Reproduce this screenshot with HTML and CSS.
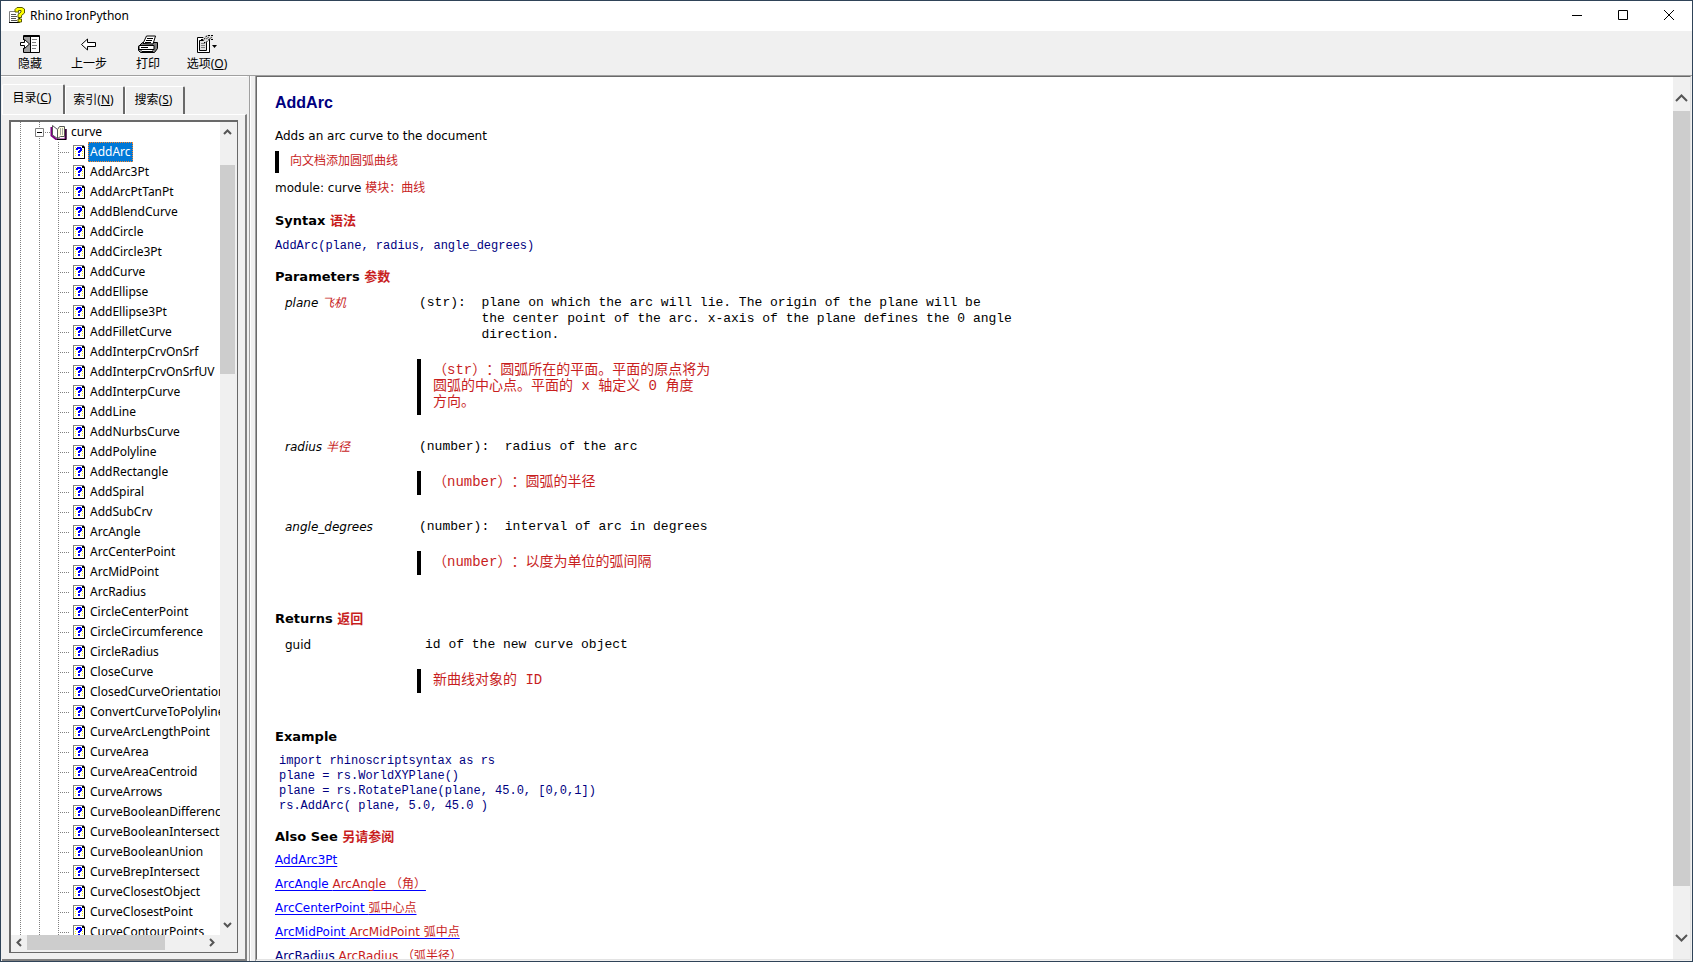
FILE: index.html
```html
<!DOCTYPE html>
<html lang="zh-CN">
<head>
<meta charset="utf-8">
<title>Rhino IronPython</title>
<link rel="stylesheet" href="styles.css">
</head>
<body>
<svg class="defs" aria-hidden="true">
  <symbol id="topic" viewBox="0 0 12 14">
    <path d="M0 0h10l2 2v12H0z" fill="#000"/>
    <path d="M0 0h10v1h-9v12H0z" fill="#808080"/>
    <path d="M1 1h8v2h2v10H1z" fill="#fff"/>
    <path d="M2.500 2v10M9.500 4v8" stroke="#ff0" stroke-dasharray="1 1" fill="none"/>
    <path d="M3 3h1V2h4v1h1v3H8v1H7v1H5V6h1V5h1V4H5v1H3zM5 9h2v2H5z" fill="#00f"/>
  </symbol>
</svg>
<div class="window">
  <header class="titlebar">
    <svg class="app-icon" width="16" height="16" viewBox="0 0 16 16">
      <path d="M.5 4.500h9v11h-9z" fill="#fff" stroke="#808080"/>
      <path d="M0 15.500h10.500V9" stroke="#000" fill="none"/>
      <path d="M2 7.500h5M2 9.500h6M2 11.500h5M2 13.500h6" stroke="#555"/>
      <path d="M6 4V2.500L8 .5h5L15.500 2v4L12.500 8.500v2H9V7.500l3-2.500V3.500H9.500V5H6zM9 12h3.500v3H9z" fill="#ff0" stroke="#5a5a00"/>
    </svg>
    <h1 class="title">Rhino IronPython</h1>
    <div class="controls">
      <button aria-label="最小化"><svg width="12" height="12"><path d="M1 6.500h10" stroke="#000"/></svg></button>
      <button aria-label="最大化"><svg width="12" height="12"><path d="M1.500 1.500h9v9h-9z" stroke="#000" fill="none"/></svg></button>
      <button aria-label="关闭"><svg width="12" height="12"><path d="M1 1l10 10M11 1L1 11" stroke="#000"/></svg></button>
    </div>
  </header>
  <nav class="toolbar">
    <button>
      <svg width="20" height="18" viewBox="0 0 20 18"><path d="M3.500 5V.5h16v17h-16V13" fill="none" stroke="#000"/><path d="M4 2h6v15H4z" fill="#a0a0a0"/><path d="M10 2h9v15h-9z" fill="#fff"/><path d="M3 1.500h16M10.500 2v15" stroke="#000"/><path d="M12 4.500h5M12 7.500h4M12 10.500h5M12 13.500h4" stroke="#808080"/><path d="M.5 7.500h4v-3l5 4.500-5 4.500v-3h-4z" fill="#fff" stroke="#000"/></svg>
      <span>隐藏</span>
    </button>
    <button>
      <svg width="20" height="18" viewBox="0 0 20 18"><path d="M2.500 9.500l6-5.500v3.500h8v4h-8V15z" fill="#fff" stroke="#000"/></svg>
      <span>上一步</span>
    </button>
    <button>
      <svg width="20" height="18" viewBox="0 0 20 18"><path d="M.5 11.500l4-4h15v6l-3 4h-14l-2-2z" fill="#808080" stroke="#000"/><path d="M5 8.500l3.500-7.500h9L15 9z" fill="#fff" stroke="#000"/><path d="M9 3.500h6M8 5.500h6M7 7.500h6" stroke="#000"/><path d="M1 10.500h15v4H1z" fill="#fff" stroke="#000"/><path d="M3 12.500h7M4 16.500h11" stroke="#000"/><path d="M4 15.500h10" stroke="#fff"/></svg>
      <span>打印</span>
    </button>
    <button>
      <svg width="20" height="18" viewBox="0 0 20 18"><path d="M.5 2.500h12v15H.5z" fill="#fff" stroke="#000"/><path d="M2.500 5.500h7v10h-7z" fill="#e0e0e0" stroke="#000"/><path d="M4 8.500h4M4 10.500h4M4 12.500h4" stroke="#808080"/><path d="M5 4l3-3.500h8v4l-4 .5-3 2.500z" fill="#ddd"/><path d="M4 4.500h3l3-4h6M16 4.500h-4l-3 3H7" fill="none" stroke="#000" stroke-dasharray="2 1"/><path d="M9 4l3-2M11 5l4-3" stroke="#555"/><path d="M15 10h5l-2.500 3z"/></svg>
      <span>选项(<u>O</u>)</span>
    </button>
  </nav>
  <div class="main">
    <aside class="sidebar">
      <div class="tabs" role="tablist">
        <button class="tab active" role="tab" aria-selected="true">目录(<u>C</u>)</button>
        <button class="tab" role="tab">索引(<u>N</u>)</button>
        <button class="tab" role="tab">搜索(<u>S</u>)</button>
      </div>
      <div class="tabpage">
        <div class="treebox">
          <ul class="tree">
            <li class="book">
              <svg width="32" height="16" viewBox="0 0 32 16"><path d="M.5 4.500h8v8h-8z" fill="#fff" stroke="#808080"/><path d="M2 8.500h5" stroke="#000"/><path d="M10 8.500h6" stroke="#808080" stroke-dasharray="1 1"/><path d="M16.500 3v8.500l5 4h9V5" fill="none" stroke="#800080" stroke-width="2"/><path d="M17.500 1.500l5 4v9l-5-3.500z" fill="#fff" stroke="#555"/><path d="M22.500 5.500l2-3h5v10h-4l-3 2z" fill="#ffd" stroke="#555"/><path d="M25.500 4v7M27.500 4v7" stroke="#aaa"/><path d="M22 15.500h9V5" stroke="#000" fill="none"/></svg>
              <a href="#curve">curve</a></li>
            <li><svg><use href="#topic"/></svg><a class="selected" href="#AddArc">AddArc</a></li>
            <li><svg><use href="#topic"/></svg><a href="#AddArc3Pt">AddArc3Pt</a></li>
            <li><svg><use href="#topic"/></svg><a href="#AddArcPtTanPt">AddArcPtTanPt</a></li>
            <li><svg><use href="#topic"/></svg><a href="#AddBlendCurve">AddBlendCurve</a></li>
            <li><svg><use href="#topic"/></svg><a href="#AddCircle">AddCircle</a></li>
            <li><svg><use href="#topic"/></svg><a href="#AddCircle3Pt">AddCircle3Pt</a></li>
            <li><svg><use href="#topic"/></svg><a href="#AddCurve">AddCurve</a></li>
            <li><svg><use href="#topic"/></svg><a href="#AddEllipse">AddEllipse</a></li>
            <li><svg><use href="#topic"/></svg><a href="#AddEllipse3Pt">AddEllipse3Pt</a></li>
            <li><svg><use href="#topic"/></svg><a href="#AddFilletCurve">AddFilletCurve</a></li>
            <li><svg><use href="#topic"/></svg><a href="#AddInterpCrvOnSrf">AddInterpCrvOnSrf</a></li>
            <li><svg><use href="#topic"/></svg><a href="#AddInterpCrvOnSrfUV">AddInterpCrvOnSrfUV</a></li>
            <li><svg><use href="#topic"/></svg><a href="#AddInterpCurve">AddInterpCurve</a></li>
            <li><svg><use href="#topic"/></svg><a href="#AddLine">AddLine</a></li>
            <li><svg><use href="#topic"/></svg><a href="#AddNurbsCurve">AddNurbsCurve</a></li>
            <li><svg><use href="#topic"/></svg><a href="#AddPolyline">AddPolyline</a></li>
            <li><svg><use href="#topic"/></svg><a href="#AddRectangle">AddRectangle</a></li>
            <li><svg><use href="#topic"/></svg><a href="#AddSpiral">AddSpiral</a></li>
            <li><svg><use href="#topic"/></svg><a href="#AddSubCrv">AddSubCrv</a></li>
            <li><svg><use href="#topic"/></svg><a href="#ArcAngle">ArcAngle</a></li>
            <li><svg><use href="#topic"/></svg><a href="#ArcCenterPoint">ArcCenterPoint</a></li>
            <li><svg><use href="#topic"/></svg><a href="#ArcMidPoint">ArcMidPoint</a></li>
            <li><svg><use href="#topic"/></svg><a href="#ArcRadius">ArcRadius</a></li>
            <li><svg><use href="#topic"/></svg><a href="#CircleCenterPoint">CircleCenterPoint</a></li>
            <li><svg><use href="#topic"/></svg><a href="#CircleCircumference">CircleCircumference</a></li>
            <li><svg><use href="#topic"/></svg><a href="#CircleRadius">CircleRadius</a></li>
            <li><svg><use href="#topic"/></svg><a href="#CloseCurve">CloseCurve</a></li>
            <li><svg><use href="#topic"/></svg><a href="#ClosedCurveOrientation">ClosedCurveOrientation</a></li>
            <li><svg><use href="#topic"/></svg><a href="#ConvertCurveToPolyline">ConvertCurveToPolyline</a></li>
            <li><svg><use href="#topic"/></svg><a href="#CurveArcLengthPoint">CurveArcLengthPoint</a></li>
            <li><svg><use href="#topic"/></svg><a href="#CurveArea">CurveArea</a></li>
            <li><svg><use href="#topic"/></svg><a href="#CurveAreaCentroid">CurveAreaCentroid</a></li>
            <li><svg><use href="#topic"/></svg><a href="#CurveArrows">CurveArrows</a></li>
            <li><svg><use href="#topic"/></svg><a href="#CurveBooleanDifference">CurveBooleanDifference</a></li>
            <li><svg><use href="#topic"/></svg><a href="#CurveBooleanIntersection">CurveBooleanIntersection</a></li>
            <li><svg><use href="#topic"/></svg><a href="#CurveBooleanUnion">CurveBooleanUnion</a></li>
            <li><svg><use href="#topic"/></svg><a href="#CurveBrepIntersect">CurveBrepIntersect</a></li>
            <li><svg><use href="#topic"/></svg><a href="#CurveClosestObject">CurveClosestObject</a></li>
            <li><svg><use href="#topic"/></svg><a href="#CurveClosestPoint">CurveClosestPoint</a></li>
            <li><svg><use href="#topic"/></svg><a href="#CurveContourPoints">CurveContourPoints</a></li>
          </ul>
          <div class="vbar">
            <button aria-label="向上滚动"><svg width="9" height="6"><path d="M1 5l3.500-3.500L8 5"/></svg></button>
            <div class="track"><div class="thumb"></div></div>
            <button aria-label="向下滚动"><svg width="9" height="6"><path d="M1 1l3.500 3.500L8 1"/></svg></button>
          </div>
          <div class="hbar">
            <button aria-label="向左滚动"><svg width="6" height="9"><path d="M5 1L1.500 4.500 5 8"/></svg></button>
            <div class="track"><div class="thumb"></div></div>
            <button aria-label="向右滚动"><svg width="6" height="9"><path d="M1 1l3.500 3.500L1 8"/></svg></button>
          </div>
        </div>
      </div>
    </aside>
    <div class="splitter"></div>
    <div class="viewer">
      <article class="page">
        <h1>AddArc</h1>
        <p>Adds an arc curve to the document</p>
        <blockquote class="intro">向文档添加圆弧曲线</blockquote>
        <p class="module">module: curve <span class="zh">模块：曲线</span></p>
        <h2>Syntax <span class="zh">语法</span></h2>
        <pre class="code">AddArc(plane, radius, angle_degrees)</pre>
        <h2>Parameters <span class="zh">参数</span></h2>
        <table>
          <tr>
            <th scope="row"><i>plane <span class="zh">飞机</span></i></th>
            <td><pre>(str):  plane on which the arc will lie. The origin of the plane will be
        the center point of the arc. x-axis of the plane defines the 0 angle
        direction.</pre>
              <blockquote>（str）：圆弧所在的平面。平面的原点将为<br>圆弧的中心点。平面的 x 轴定义 0 角度<br>方向。</blockquote></td>
          </tr>
          <tr>
            <th scope="row"><i>radius <span class="zh">半径</span></i></th>
            <td><pre>(number):  radius of the arc</pre>
              <blockquote>（number）：圆弧的半径</blockquote></td>
          </tr>
          <tr>
            <th scope="row"><i>angle_degrees</i></th>
            <td><pre>(number):  interval of arc in degrees</pre>
              <blockquote>（number）：以度为单位的弧间隔</blockquote></td>
          </tr>
        </table>
        <h2>Returns <span class="zh">返回</span></h2>
        <table>
          <tr>
            <th scope="row">guid</th>
            <td><pre class="value">id of the new curve object</pre>
              <blockquote>新曲线对象的 ID</blockquote></td>
          </tr>
        </table>
        <h2>Example</h2>
        <pre class="code example">import rhinoscriptsyntax as rs
plane = rs.WorldXYPlane()
plane = rs.RotatePlane(plane, 45.0, [0,0,1])
rs.AddArc( plane, 5.0, 45.0 )</pre>
        <h2>Also See <span class="zh">另请参阅</span></h2>
        <ul class="links">
          <li><a href="#AddArc3Pt">AddArc3Pt</a></li>
          <li><a href="#ArcAngle">ArcAngle <span class="zh">ArcAngle （角）</span></a></li>
          <li><a href="#ArcCenterPoint">ArcCenterPoint <span class="zh">弧中心点</span></a></li>
          <li><a href="#ArcMidPoint">ArcMidPoint <span class="zh">ArcMidPoint 弧中点</span></a></li>
          <li><a class="current" href="#ArcRadius">ArcRadius <span class="zh">ArcRadius （弧半径）</span></a></li>
        </ul>
      </article>
      <div class="vbar wide">
        <button aria-label="向上滚动"><svg width="13" height="9"><path d="M1 8l5.500-5.500L12 8"/></svg></button>
        <div class="track"><div class="thumb"></div></div>
        <button aria-label="向下滚动"><svg width="13" height="9"><path d="M1 1l5.500 5.500L12 1"/></svg></button>
      </div>
    </div>
  </div>
</div>
</body>
</html>
```
FILE: styles.css
```css
* { box-sizing: border-box; }
body { margin: 0; font-family: "Noto Sans", "Noto Sans CJK SC", sans-serif; font-size: 12px; color: #000; }
h1, h2, p, pre, ul, blockquote { margin: 0; padding: 0; }
ul { list-style: none; }
a { color: inherit; text-decoration: none; }
button { border: 0; padding: 0; background: none; font: inherit; color: inherit; }
.defs { display: none; }

.window { height: 100vh; display: flex; flex-direction: column; overflow: hidden; background: #f0f0f0; border: 1px solid #2f4358; }

.titlebar { display: flex; align-items: center; height: 30px; flex: none; padding: 0 0 2px 8px; gap: 5px; background: #fff; }
.title { flex: 1; font-size: 12px; font-weight: 400; }
.controls { display: flex; }
.controls button { width: 46px; height: 28px; display: grid; place-items: center; }

.toolbar { display: flex; flex: none; height: 44px; }
.toolbar button { width: 59px; padding: 4px 1px 0 0; display: flex; flex-direction: column; align-items: center; gap: 2px; line-height: 18px; }

.main { flex: 1; min-height: 0; display: flex; border-top: 1px solid #a0a0a0; }
.sidebar { width: 246px; flex: none; display: flex; flex-direction: column; padding: 7px 0 0 1px; border-top: 1px solid #fff; }
.splitter { flex: none; width: 7px; margin-left: 2px; border-left: 1px solid #a0a0a0; border-right: 1px solid #a0a0a0; background: #f0f0f0; box-shadow: inset 1px 0 #fff; }

.tabs { display: flex; align-items: flex-end; height: 30px; }
.tab { width: 60px; height: 28px; padding: 0 2px 3px 0; border: 1px solid #fff; border-right: 2px solid #696969; border-bottom: 0; border-radius: 2px 2px 0 0; }
.tab.active { width: 63px; height: 30px; padding-bottom: 6px; }
.tabpage { flex: 1; min-height: 0; padding: 5px 7px 6px 7px; border-top: 1px solid #fff; border-right: 2px solid #808080; border-bottom: 2px solid #808080; }

.treebox { height: 100%; display: grid; grid-template-columns: minmax(0, 1fr) 15px; grid-template-rows: minmax(0, 1fr) 15px; padding-right: 2px; padding-bottom: 2px; border: 2px solid #696969; border-right-width: 1px; border-bottom-width: 1px; background: #f0f0f0; }
.tree { overflow: hidden; background: #fff; font-size: 12px; }
.tree li { display: flex; align-items: center; gap: 3px; height: 20px; padding-left: 62px; white-space: nowrap;
  background:
    repeating-linear-gradient(#808080 0 1px, #fff 1px 2px) 9px 0 / 1px 20px no-repeat,
    repeating-linear-gradient(#808080 0 1px, #fff 1px 2px) 28px 0 / 1px 20px no-repeat,
    repeating-linear-gradient(#808080 0 1px, #fff 1px 2px) 47px 0 / 1px 20px no-repeat,
    repeating-linear-gradient(90deg, #808080 0 1px, #fff 1px 2px) 49px 10px / 10px 1px no-repeat; }
.tree svg { flex: none; width: 12px; height: 14px; }
.tree .book { padding-left: 24px; gap: 2px;
  background:
    repeating-linear-gradient(#808080 0 1px, #fff 1px 2px) 9px 0 / 1px 20px no-repeat,
    repeating-linear-gradient(#808080 0 1px, #fff 1px 2px) 28px 0 / 1px 20px no-repeat; }
.tree .book svg { width: 32px; height: 16px; }
.tree a { line-height: 18px; padding: 0 1px; border: 1px solid transparent; }
.tree .selected { background: #0078d7; color: #fff; border: 1px dotted #ff8728; }

.vbar, .hbar { display: flex; background: #f0f0f0; }
.vbar { flex-direction: column; }
.vbar button, .hbar button { flex: none; display: grid; place-items: center; }
.vbar button { height: 20px; }
.hbar button { width: 16px; }
.track { flex: 1; min-height: 0; }
.thumb { background: #cdcdcd; }
.vbar svg path, .hbar svg path { fill: none; stroke: #555; stroke-width: 2; }
.tree + .vbar .thumb { height: 27%; margin-top: 23px; }
.hbar .thumb { height: 100%; width: 78%; }

.viewer { flex: 1; min-width: 0; display: flex; margin-right: 1px; margin-bottom: 1px; border-top: 1px solid #696969; border-left: 1px solid #696969; border-right: 1px solid #e3e3e3; border-bottom: 1px solid #e3e3e3; background: #fff; }
.vbar.wide { width: 17px; flex: none; }
.wide button { height: 41px; }
.wide button:first-child { height: 34px; padding-top: 6px; }
.wide .thumb { height: 96%; }

.page { flex: 1; min-width: 0; overflow: hidden; padding: 16px 18px 0; font-family: "DejaVu Sans", "Noto Sans CJK SC", sans-serif; font-size: 12px; line-height: 20px; text-spacing-trim: space-all; }
.page h1 { font: bold 16px/20px "Liberation Sans", sans-serif; color: #000080; margin-bottom: 13px; }
.page h2 { font-size: 13px; line-height: 20px; margin-top: 10px; }
.page .zh { color: #c81e1e; }
.page pre, .page blockquote { font-family: "Liberation Mono", "Noto Sans CJK SC", monospace; }
.page blockquote { color: #c81e1e; border-left: 4px solid #000; padding: 3px 0 5px 12px; font-size: 14px; line-height: 16px; margin-top: 16px; }
.page .intro { font-size: 12px; line-height: 20px; padding: 1px 0 1px 11px; margin: 5px 0; }
.page .module { margin-bottom: 13px; }
.page pre { font-size: 13px; line-height: 16px; padding-left: 2px; }
.page .value { padding-left: 8px; }
.page .code { font-size: 12px; line-height: 15px; color: #000080; padding: 0; margin: 8px 0 13px; }
.page .example { padding-left: 4px; margin-top: 7px; }
table { border-spacing: 0; margin-top: 8px; }
th, td { padding: 0 0 24px; text-align: left; vertical-align: top; line-height: 16px; }
th { width: 142px; padding-left: 10px; font-weight: 400; }
.links { margin-top: 3px; display: flex; flex-direction: column; gap: 4px; }
.links a { color: #00f; text-decoration: underline; text-underline-offset: 2px; }
.links .current { color: #000080; }
```
